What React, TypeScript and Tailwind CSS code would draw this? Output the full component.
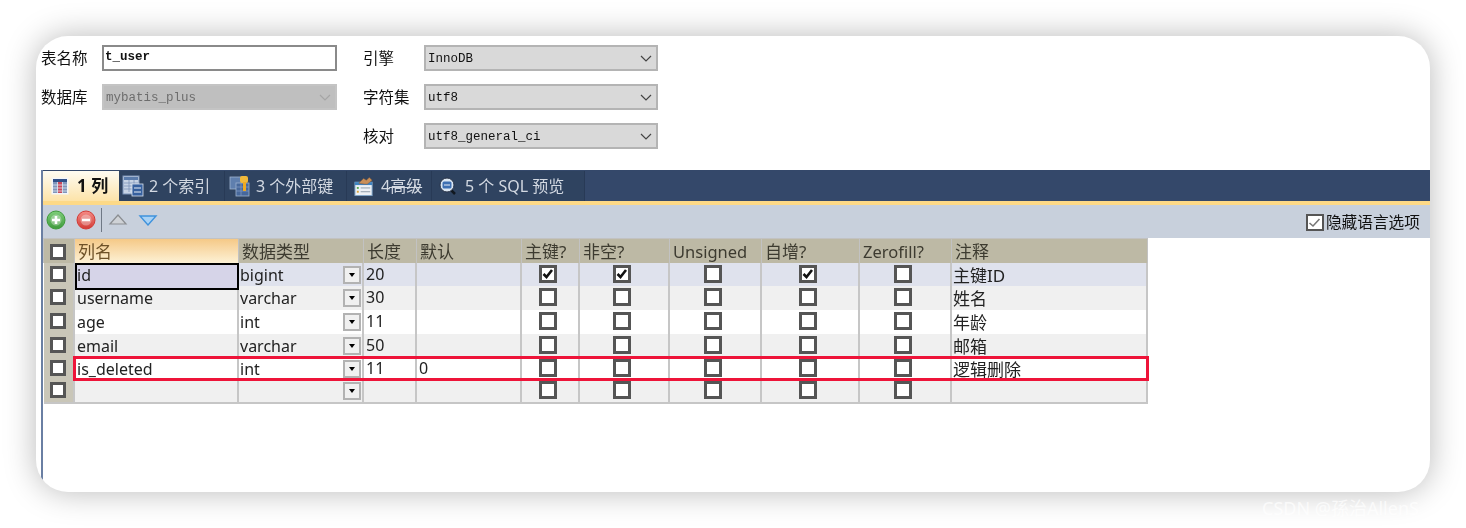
import React from "react";

const sans = "font-['Noto_Sans','Noto_Sans_CJK_SC',sans-serif]";
const mono = "font-['Liberation_Mono','Noto_Sans_CJK_SC',monospace]";

const headers = [
  { label: "列名", active: true },
  { label: "数据类型" },
  { label: "长度" },
  { label: "默认" },
  { label: "主键?" },
  { label: "非空?" },
  { label: "Unsigned", latin: true },
  { label: "自增?" },
  { label: "Zerofill?", latin: true },
  { label: "注释" },
];

const rows = [
  { name: "id", type: "bigint", len: "20", def: "", checks: [true, true, false, true, false], note: "主键ID", bg: "bg-[#dfe2ed]", h: "h-[23px]" },
  { name: "username", type: "varchar", len: "30", def: "", checks: [false, false, false, false, false], note: "姓名", bg: "bg-[#f0f0f0]", h: "h-[24px]" },
  { name: "age", type: "int", len: "11", def: "", checks: [false, false, false, false, false], note: "年龄", bg: "bg-white", h: "h-[24px]" },
  { name: "email", type: "varchar", len: "50", def: "", checks: [false, false, false, false, false], note: "邮箱", bg: "bg-[#f0f0f0]", h: "h-[23px]" },
  { name: "is_deleted", type: "int", len: "11", def: "0", checks: [false, false, false, false, false], note: "逻辑删除", bg: "bg-white", h: "h-[24px]" },
  { name: "", type: "", len: "", def: "", checks: [false, false, false, false, false], note: "", bg: "bg-[#f0f0f0]", h: "h-[23px]" },
];

const gridCols =
  "grid grid-cols-[31px_164px_125px_53px_105px_58px_90px_92px_98px_92px_196px]";

function Check({ on, small }: { on?: boolean; small?: boolean }) {
  return (
    <div
      className={`${
        small ? "w-[16px] h-[16px]" : "w-[18px] h-[18px]"
      } border-[3px] border-[#555] bg-white flex items-center justify-center`}
    >
      {on && (
        <svg width="12" height="12" viewBox="0 0 12 12">
          <path d="M1.500 6l3 3 5.500-7" fill="none" stroke="#111" strokeWidth="2.6" />
        </svg>
      )}
    </div>
  );
}

function Chevron({ color = "#444" }: { color?: string }) {
  return (
    <svg width="12" height="7" viewBox="0 0 12 7">
      <path d="M1 1l5 5 5-5" fill="none" stroke={color} strokeWidth="1.2" />
    </svg>
  );
}

function Select({ value, disabled }: { value: string; disabled?: boolean }) {
  return (
    <div
      className={`h-[26px] flex items-center justify-between pl-[2px] pr-[4px] border-2 ${
        disabled
          ? "bg-[#bfbfbf] border-[#c4c4c4] text-[#6d6d6d]"
          : "bg-[#d9d9d9] border-[#b4b4b4] text-[#111]"
      } ${mono} text-[12.5px]`}
    >
      <span className="pt-[2px]">{value}</span>
      <Chevron color={disabled ? "#a5a5a5" : "#444"} />
    </div>
  );
}

function Label({ children }: { children: React.ReactNode }) {
  return <div className={`${sans} text-[15.5px] text-[#111] leading-[26px]`}>{children}</div>;
}

function ColumnsIcon() {
  return (
    <svg width="18" height="18" viewBox="0 0 18 18">
      <rect x="0.5" y="0.5" width="17" height="17" fill="#f4f6fa" />
      <rect x="2" y="2" width="14" height="14" fill="#7f96bb" />
      <rect x="2" y="2" width="14" height="3" fill="#2f4f88" />
      <rect x="7" y="5" width="4" height="11" fill="#c9485a" />
      <path d="M2 8h14M2 11h14M2 14h14M6.500 5v11M11.500 5v11" stroke="#dfe6f0" strokeWidth="0.8" />
    </svg>
  );
}

function IndexIcon() {
  return (
    <svg width="22" height="22" viewBox="0 0 22 22">
      <rect x="1" y="1" width="16" height="18" fill="#c7d3e4" stroke="#7d94b8" />
      <rect x="2" y="2" width="14" height="3" fill="#5a7bab" />
      <path d="M2 8h14M2 11h14M2 14h14M7 5v12M12 5v12" stroke="#7d94b8" strokeWidth="0.8" />
      <rect x="10" y="9" width="11" height="12" fill="#36609e" stroke="#dbe4f0" strokeWidth="0.8" />
      <path d="M12 13h7M12 17h7" stroke="#e8eef6" strokeWidth="1.2" />
    </svg>
  );
}

function ForeignKeyIcon() {
  return (
    <svg width="22" height="22" viewBox="0 0 22 22">
      <rect x="1" y="2" width="12" height="12" fill="#5f7fae" stroke="#9fb3d0" strokeWidth="0.8" />
      <rect x="7" y="8" width="13" height="13" fill="#47689b" stroke="#9fb3d0" strokeWidth="0.8" />
      <path d="M7 12h13M7 16h13M12 8v13" stroke="#7d98c0" strokeWidth="0.8" />
      <rect x="11" y="1" width="8" height="7" rx="2" fill="#f0b93a" />
      <rect x="14" y="7" width="3" height="9" fill="#eeaa22" />
    </svg>
  );
}

function AdvancedIcon() {
  return (
    <svg width="20" height="21" viewBox="0 0 21 21">
      <rect x="1" y="6" width="18" height="14" fill="#edf1f5" stroke="#7fa5c9" />
      <rect x="1" y="6" width="18" height="3" fill="#3f83c0" />
      <rect x="3" y="11" width="2" height="2" fill="#5aa84e" />
      <rect x="3" y="15" width="2" height="2" fill="#d9a43a" />
      <path d="M7 12h10M7 16h10" stroke="#8c9aa8" />
      <path d="M5 7l5-5 3 2 3-3 3 3-5 4-3 0z" fill="#c98f58" stroke="#8d5b30" strokeWidth="0.5" />
    </svg>
  );
}

function PreviewIcon() {
  return (
    <svg width="18" height="18" viewBox="0 0 18 18">
      <path d="M11 12l5 5" stroke="#111820" strokeWidth="2.5" />
      <circle cx="8" cy="8" r="7" fill="#dbe6f2" stroke="#2a3448" />
      <rect x="3.500" y="4.500" width="9" height="7" rx="1.500" fill="#3e6fb2" />
      <path d="M5 8h6" stroke="#e8eef6" />
    </svg>
  );
}

function RoundButton({ from, to, bar }: { from: string; to: string; bar: "plus" | "minus" }) {
  return (
    <svg width="20" height="20" viewBox="0 0 20 20">
      <defs>
        <linearGradient id={`g-${bar}`} x1="0" y1="0" x2="0" y2="1">
          <stop offset="0" stopColor={from} />
          <stop offset="1" stopColor={to} />
        </linearGradient>
      </defs>
      <circle cx="10" cy="10" r="9" fill={`url(#g-${bar})`} stroke={to} />
      <circle cx="10" cy="10" r="5.500" fill="#f5f5f5" opacity="0.35" />
      <path d={bar === "plus" ? "M6 10h8M10 6v8" : "M6 10h8"} stroke="#fff" strokeWidth="2.6" />
    </svg>
  );
}

const tabs = [
  { icon: <IndexIcon />, label: "2 个索引", cls: "w-[106px] pl-[3px] gap-[5px]" },
  { icon: <ForeignKeyIcon />, label: "3 个外部键", cls: "w-[122px] pl-[4px] gap-[5px]" },
  { icon: <AdvancedIcon />, label: "4高级", cls: "w-[85px] pl-[7px] gap-[7px]" },
  { icon: <PreviewIcon />, label: "5 个 SQL 预览", cls: "w-[153px] pl-[7px] gap-[8px]" },
];

function Tabs() {
  return (
    <div className="h-[31px] bg-[#34486a] flex items-end">
      <div className={`w-[76px] h-[30px] bg-gradient-to-b from-[#fdfbf2] to-[#fde3a8] flex items-center pl-[8px] gap-[8px] ${sans} font-bold text-[17px] text-[#111]`}>
        <ColumnsIcon />
        <span className="whitespace-nowrap">1 列</span>
      </div>
      {tabs.map((t) => (
        <div
          key={t.label}
          className={`${t.cls} h-[30px] bg-[#2f4360] border-r border-[#283a56] flex items-center ${sans} text-[16px] text-[#d3d9e2] whitespace-nowrap`}
        >
          {t.icon}
          <span className={t.label === "4高级" ? "underline decoration-1 underline-offset-[-5px]" : ""}>{t.label}</span>
        </div>
      ))}
    </div>
  );
}

function Toolbar() {
  return (
    <div className="h-[33px] bg-[#c8d0dc] flex items-center pl-[3px] pr-[10px] pb-[3px]">
      <RoundButton from="#7fce7a" to="#3e9a3b" bar="plus" />
      <div className="w-[10px]" />
      <RoundButton from="#f58b86" to="#d23b36" bar="minus" />
      <div className="w-[1px] h-[24px] bg-[#6f7885] ml-[5px] mr-[6px]" />
      <svg width="20" height="12" viewBox="0 0 20 12">
        <path d="M10 1l8 9H2z" fill="#cfd2d6" stroke="#8b8e92" strokeWidth="1.2" />
      </svg>
      <svg className="ml-[10px]" width="20" height="12" viewBox="0 0 20 12">
        <path d="M2 2h16l-8 9z" fill="#a9d2f5" stroke="#3f92dc" strokeWidth="1.4" />
      </svg>
      <div className={`ml-auto mt-[6px] flex items-center gap-[2px] ${sans} text-[15.7px] text-[#111]`}>
        <div className="w-[18px] h-[17px] border-[2px] border-[#555] bg-white flex items-center justify-center">
          <svg width="13" height="12" viewBox="0 0 13 12">
            <path d="M1.500 6l3.500 3 6.500-7" fill="none" stroke="#777" strokeWidth="1.600" />
          </svg>
        </div>
        <span>隐藏语言选项</span>
      </div>
    </div>
  );
}

function HeaderRow() {
  return (
    <div className={`${gridCols} h-[25px] bg-[#c2c2c2] p-[1px] pr-0`}>
      <div className="bg-[#bdb9a5] mr-[1px] mb-[1px] flex items-center justify-center pr-[2px]">
        <Check small />
      </div>
      {headers.map((h) => (
        <div
          key={h.label}
          className={`mr-[1px] mb-[1px] pl-[3px] whitespace-nowrap ${sans} leading-[25px] ${
            h.latin ? "text-[16.5px]" : "text-[17px]"
          } ${
            h.active ? "bg-gradient-to-b from-[#f5c987] to-[#fdf3d8] text-[#6e5128]" : "bg-[#bdb9a5] text-[#3d3b30]"
          }`}
        >
          {h.label}
        </div>
      ))}
    </div>
  );
}

function Row({ row, first }: { row: (typeof rows)[number]; first?: boolean }) {
  const cell = `border-r-2 border-b-2 border-[#c6c6c6] ${row.bg}`;
  const text = `${sans} text-[16px] text-[#222] whitespace-nowrap`;
  return (
    <div className={`${gridCols} ${row.h} pl-[1px]`}>
      <div className="bg-[#c9c6b8] border-r-2 border-b-2 border-[#c6c6c6] flex items-center justify-center pr-[2px] pb-[3px]">
        <Check small />
      </div>
      <div
        className={`${text} pl-[2px] leading-[25px] ${
          first ? "relative z-10 bg-[#d6d4e8] outline-2 -outline-offset-2 outline-black" : cell
        }`}
      >
        {row.name}
      </div>
      <div className={`${cell} ${text} pl-[1px] flex items-center justify-between pr-[1px] pb-[2px]`}>
        <span className="leading-[20px]">{row.type}</span>
        <div className="w-[18px] h-[18px] bg-[#f0f0f0] border-2 border-[#b2b2b2] flex items-center justify-center">
          <div className="border-x-[3.5px] border-x-transparent border-t-[4px] border-t-black" />
        </div>
      </div>
      <div className={`${cell} ${text} pl-[2px] leading-[23px]`}>{row.len}</div>
      <div className={`${cell} ${text} pl-[2px] leading-[23px]`}>{row.def}</div>
      {row.checks.map((c, i) => (
        <div key={i} className={`${cell} flex items-center justify-center pr-[4px] pb-[3px]`}>
          <Check on={c} />
        </div>
      ))}
      <div className={`${cell} ${sans} text-[17px] text-[#222] whitespace-nowrap pl-[1px] leading-[25px]`}>{row.note}</div>
    </div>
  );
}

export default function App() {
  return (
    <div className="w-full h-[528px] bg-white p-[36px] relative">
      <div className="h-[456px] bg-white rounded-[32px] shadow-[0_0_32px_rgba(0,0,0,0.28)] overflow-hidden relative blur-[0.4px]">
        <div className="grid grid-cols-[61px_235px_26px_61px_234px] auto-rows-[26px] gap-y-[13px] pl-[5px] pt-[9px] mb-[21px]">
          <Label>表名称</Label>
          <div className={`h-[26px] border-2 border-[#8a8a8a] bg-white pl-[1px] ${mono} font-bold text-[12.5px] leading-[21px] text-[#111]`}>
            t_user
          </div>
          <div />
          <Label>引擎</Label>
          <Select value="InnoDB" />

          <Label>数据库</Label>
          <Select value="mybatis_plus" disabled />
          <div />
          <Label>字符集</Label>
          <Select value="utf8" />

          <div className="col-span-3" />
          <Label>核对</Label>
          <Select value="utf8_general_ci" />
        </div>

        <div className="ml-[5px] h-[322px] border-l-2 border-[#6a7fa3]">
          <Tabs />
          <div className="h-[4px] bg-[#fdd987]" />
          <Toolbar />
          <div className="w-[1105px]">
            <HeaderRow />
            {rows.map((r, i) => (
              <Row key={i} row={r} first={i === 0} />
            ))}
          </div>
        </div>

        <div className="absolute left-[37px] top-[320px] w-[1076px] h-[25px] border-[3px] border-[#ee1439] z-20" />
      </div>
      <div className={`absolute left-[1262px] top-[495px] ${sans} text-[18px] text-white/70 whitespace-nowrap`}>
        CSDN @孫治AllenS
      </div>
    </div>
  );
}
